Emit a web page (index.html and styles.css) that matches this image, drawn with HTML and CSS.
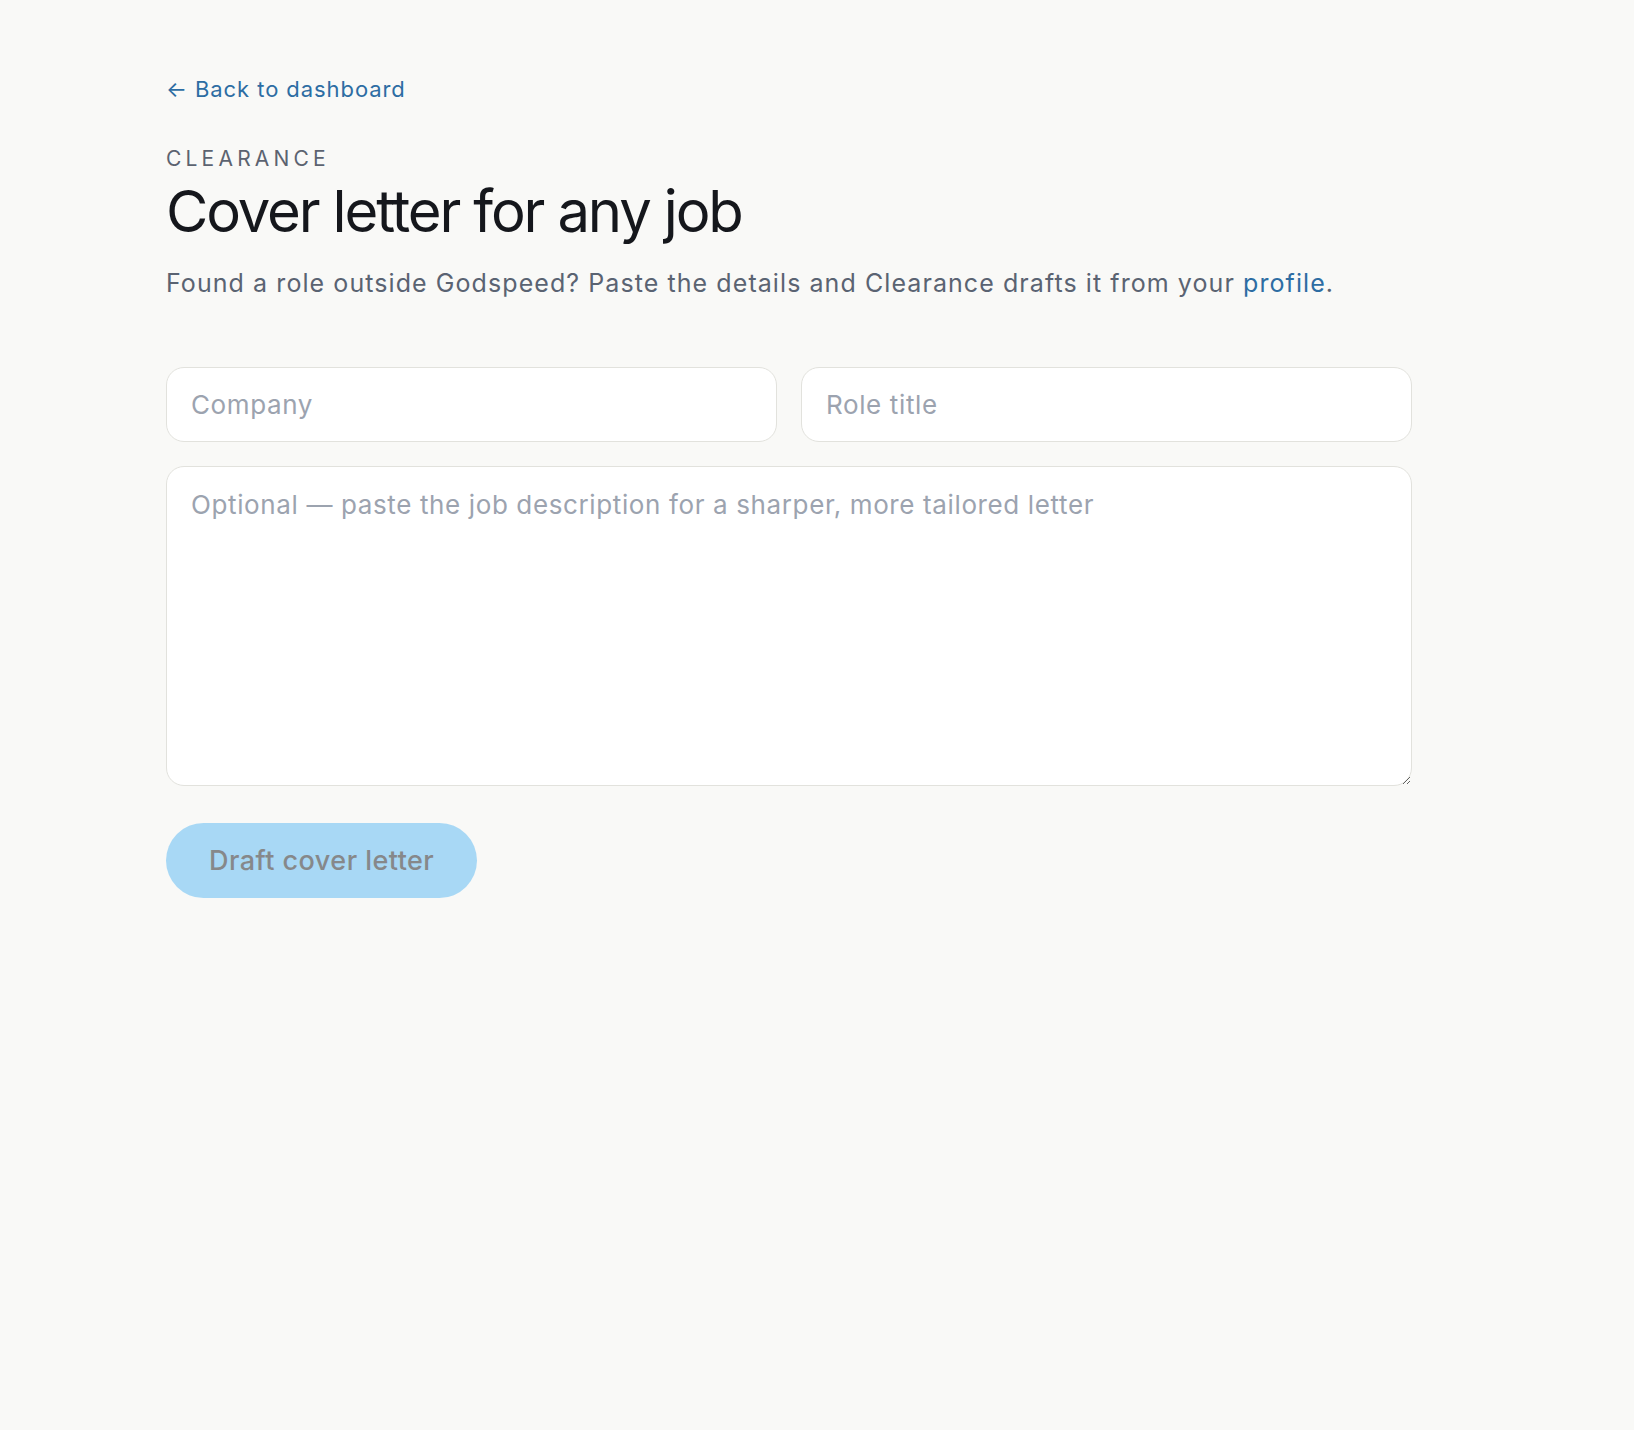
FILE: index.html
```html
<!DOCTYPE html>
<html lang="en">
<head>
<meta charset="utf-8">
<title>Cover letter for any job</title>
<link rel="stylesheet" href="styles.css">
</head>
<body>
<main class="page">
  <div class="content">
    <a class="back" href="#">← Back to dashboard</a>
    <div class="eyebrow">CLEARANCE</div>
    <h1 class="title">Cover letter for any job</h1>
    <p class="lede">Found a role outside Godspeed? Paste the details and Clearance drafts it from your <a class="link" href="#">profile</a>.</p>
    <form class="form">
      <div class="row">
        <input class="field" type="text" placeholder="Company">
        <input class="field" type="text" placeholder="Role title">
      </div>
      <textarea class="area" placeholder="Optional — paste the job description for a sharper, more tailored letter"></textarea>
      <div class="actions">
        <button class="btn" type="button" disabled>Draft cover letter</button>
      </div>
    </form>
  </div>
</main>
</body>
</html>
```
FILE: styles.css
```css
* { box-sizing: border-box; }
html, body { margin: 0; padding: 0; }
body {
  background: #f9f9f7;
  font-family: Inter, "Noto Sans", "Liberation Sans", sans-serif;
  color: #16181d;
  min-height: 1430px;
}
.page {
  padding: 73px 0 0 166px;
}
.content {
  width: 1246px;
  display: flex;
  flex-direction: column;
}
.back {
  display: block;
  align-self: flex-start;
  font-size: 22px;
  line-height: 32px;
  letter-spacing: 0.042em;
  color: #2d6da3;
  text-decoration: none;
}
.eyebrow {
  margin-top: 37px;
  font-size: 21px;
  line-height: 33px;
  letter-spacing: 0.2em;
  color: #5c6370;
}
.title {
  margin: 0;
  font-size: 58px;
  line-height: 73px;
  font-weight: 400;
  letter-spacing: -0.037em;
  color: #15171c;
}
.lede {
  margin: 16px 0 0;
  font-size: 25px;
  line-height: 38px;
  letter-spacing: 0.043em;
  color: #5a6372;
}
.link {
  color: #2d6da3;
  text-decoration: none;
}
.form {
  margin-top: 65px;
  display: flex;
  flex-direction: column;
  gap: 24px;
}
.row {
  display: grid;
  grid-template-columns: 1fr 1fr;
  gap: 24px;
}
.field, .area {
  font-family: inherit;
  font-size: 26px;
  letter-spacing: 0.024em;
  color: #16181d;
  background: #ffffff;
  border: 1.5px solid #e2e2dd;
  border-radius: 18px;
  outline: none;
}
.field {
  height: 75px;
  padding: 0 24px;
}
.area {
  height: 320px;
  padding: 18px 24px;
  line-height: 39px;
  resize: vertical;
}
.field::placeholder, .area::placeholder {
  color: #9ca3af;
  opacity: 1;
}
.actions {
  margin-top: 13px;
  display: flex;
}
.btn {
  height: 75px;
  padding: 0 43px;
  border: none;
  border-radius: 999px;
  background: #a8d8f5;
  color: #86888a;
  font-family: inherit;
  font-size: 27px;
  font-weight: 500;
  letter-spacing: 0.017em;
}
```
